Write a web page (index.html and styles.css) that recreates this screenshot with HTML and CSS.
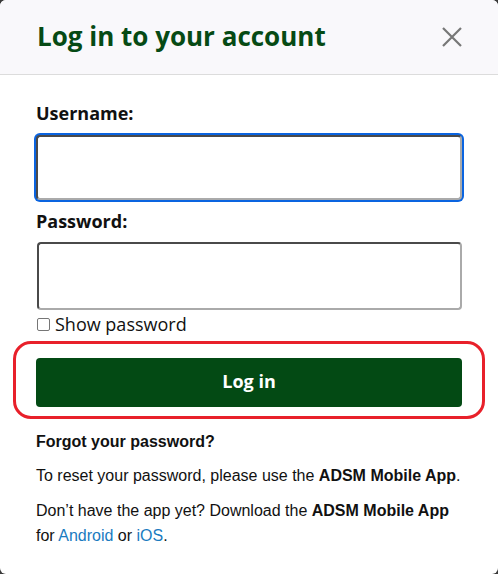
FILE: index.html
```html
<!DOCTYPE html>
<html lang="en">
<head>
<meta charset="utf-8">
<title>Log in</title>
<link rel="stylesheet" href="styles.css">
</head>
<body>
<div class="modal">
  <div class="modal-header">
    <h1 class="modal-title">Log in to your account</h1>
    <button class="close" aria-label="Close">
      <svg width="20" height="20" viewBox="0 0 20 20"><path d="M1 1 L19 19 M19 1 L1 19" stroke="#777" stroke-width="2.2" fill="none"/></svg>
    </button>
  </div>
  <div class="modal-body">
    <label class="field-label" for="u">Username:</label>
    <input class="field focused" id="u" type="text">
    <label class="field-label pw" for="p">Password:</label>
    <input class="field" id="p" type="password">
    <label class="show"><span class="box"></span>Show password</label>
    <div class="highlight">
      <button class="login">Log in</button>
    </div>
    <p class="forgot">Forgot your password?</p>
    <p class="txt">To reset your password, please use the <b>ADSM Mobile App</b>.</p>
    <p class="txt two">Don’t have the app yet? Download the <b>ADSM Mobile App</b> for <a href="#">Android</a> or <a href="#">iOS</a>.</p>
  </div>
</div>
</body>
</html>
```
FILE: styles.css
```css
html, body {
  margin: 0;
  padding: 0;
  background: #3a3a3a;
}
.modal {
  width: 498px;
  height: 574px;
  background: #fff;
  border-radius: 6px;
  overflow: hidden;
  font-family: "Open Sans", sans-serif;
  color: #111;
}
.modal-header {
  height: 74px;
  border-bottom: 1px solid #dcdcdc;
  background: #f9f8fb;
  display: flex;
  align-items: center;
  justify-content: space-between;
  padding: 0 36px 0 37px;
}
.modal-title {
  margin: 0;
  font-size: 26px;
  font-weight: 700;
  color: #064a14;
  line-height: 1;
  padding-bottom: 3px;
}
.close {
  border: 0;
  background: none;
  padding: 0;
  width: 20px;
  height: 20px;
  display: flex;
}
.modal-body {
  padding: 0 36px;
}
.field-label {
  display: block;
  font-size: 18px;
  font-weight: 700;
  line-height: 24px;
  margin: 26px 0 10px 0;
}
.field-label.pw {
  margin-top: 9px;
  margin-bottom: 9px;
}
.field {
  display: block;
  box-sizing: border-box;
  width: 426px;
  height: 65px;
  margin: 0;
  border: 2px solid #4a4a4a;
  border-bottom-color: #aaa;
  border-right-color: #aaa;
  border-radius: 4px;
  background: #fff;
  outline: none;
}
.field:not(.focused) {
  width: 425px;
  height: 68px;
  margin-left: 1px;
}
.field.focused {
  box-shadow: 0 0 0 2px #0a64e0;
}
.show {
  display: flex;
  align-items: center;
  font-size: 18px;
  line-height: 24px;
  margin-top: 2px;
  margin-left: 1px;
  color: #111;
}
.box {
  width: 11px;
  height: 11px;
  border: 1px solid #767676;
  border-radius: 2px;
  margin-right: 5px;
  background: #fff;
}
.highlight {
  margin: 5px -23px 0 -23px;
  border: 3px solid #e8202a;
  border-radius: 18px;
  padding: 14px 20px 9px 20px;
}
.login {
  display: block;
  width: 426px;
  height: 49px;
  border: 0;
  border-radius: 4px;
  background: #034a14;
  color: #fff;
  font-family: "Open Sans", sans-serif;
  font-weight: 700;
  font-size: 18px;
  padding: 0 0 3px 0;
}
.forgot {
  font-family: "Liberation Sans", Arial, sans-serif;
  font-weight: 700;
  font-size: 16px;
  margin: 13px 0 0 0;
  line-height: 20px;
}
.txt {
  font-family: "Liberation Sans", Arial, sans-serif;
  font-size: 16px;
  line-height: 25px;
  margin: 11px 0 0 0;
  color: #111;
}
.txt.two {
  margin-top: 10px;
}
.txt a {
  color: #1a7bbf;
  text-decoration: none;
}
```
